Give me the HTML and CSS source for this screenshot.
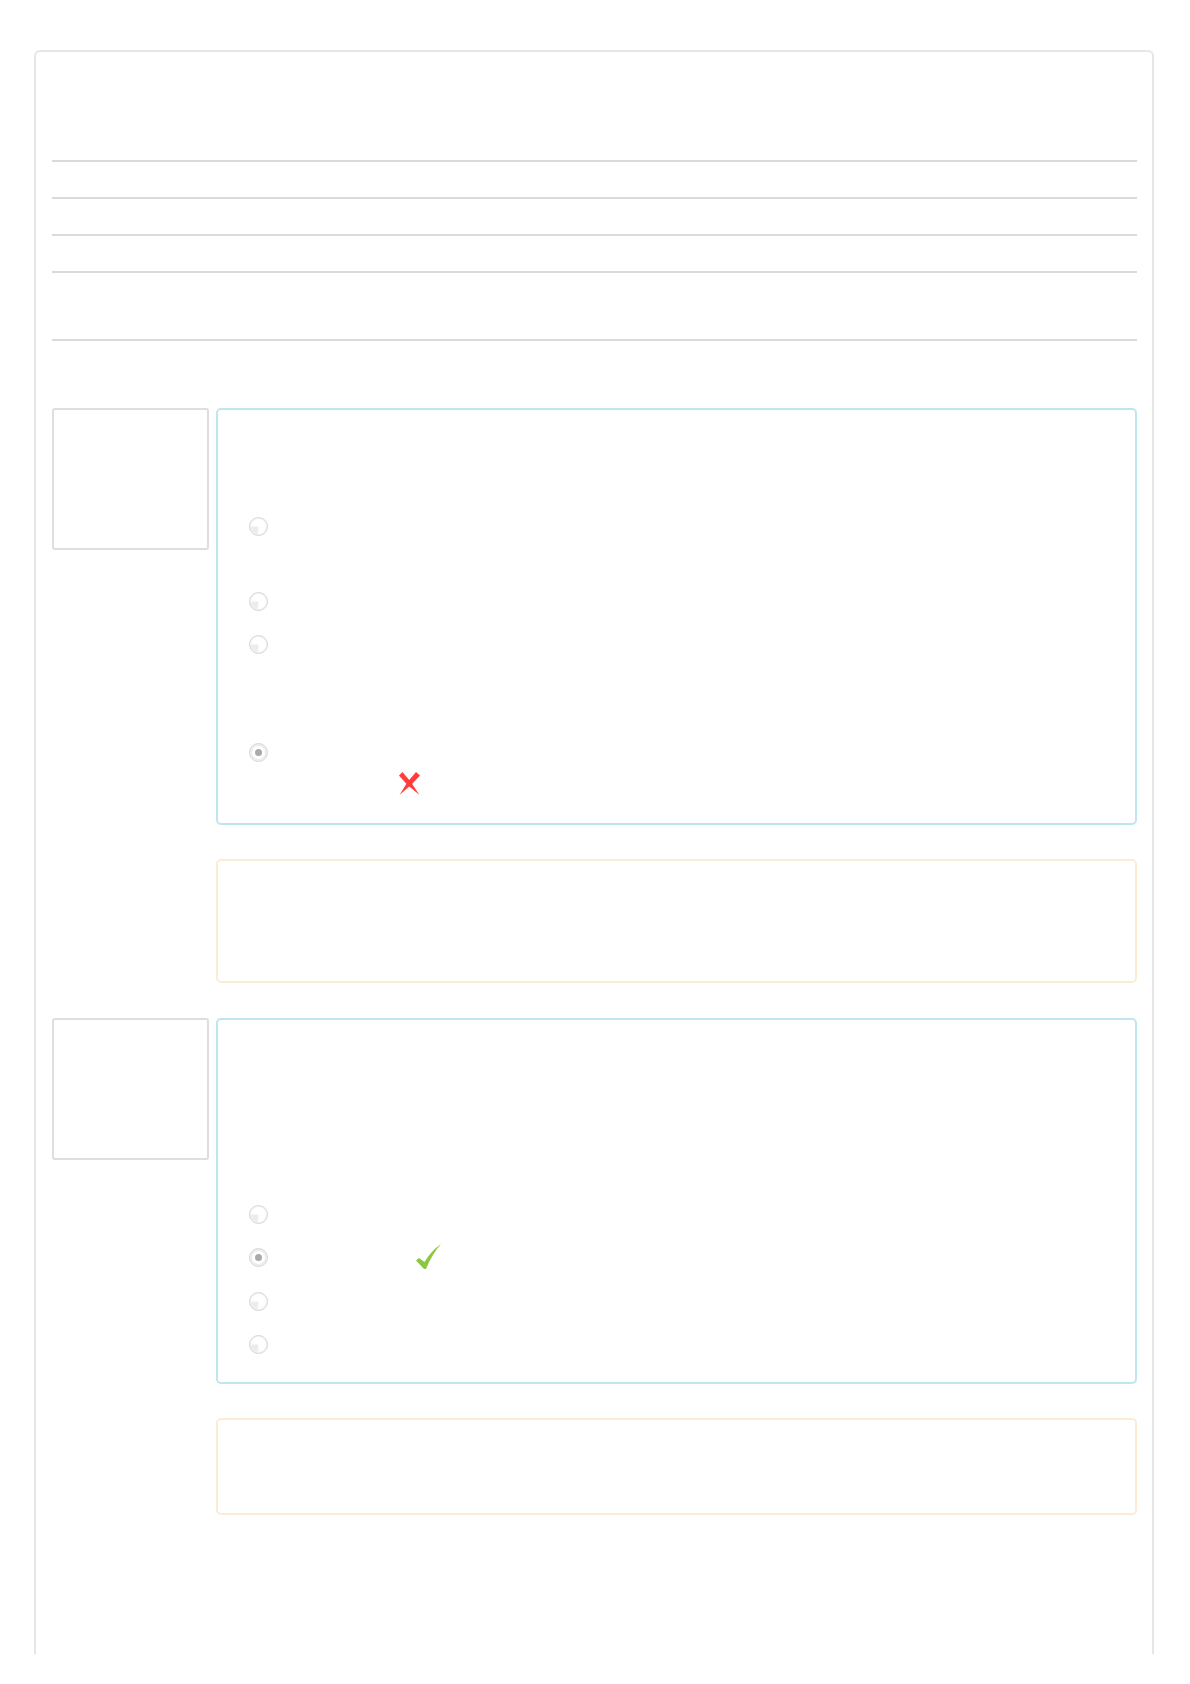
FILE: index.html
```html
<!DOCTYPE html>
<html lang="en">
<head>
<meta charset="utf-8">
<title>Quiz review</title>
<link rel="stylesheet" href="styles.css">
</head>
<body>
<div class="card">
  <div class="card-head"></div>
  <div class="summary">
    <div class="srow"></div>
    <div class="srow"></div>
    <div class="srow"></div>
    <div class="srow tall"></div>
  </div>

  <div class="que q1">
    <div class="info"></div>
    <div class="content">
      <div class="formulation">
        <div class="qtext"></div>
        <div class="ans h75"><span class="radio"></span></div>
        <div class="ans h43"><span class="radio"></span></div>
        <div class="ans h108"><span class="radio"></span></div>
        <div class="ans">
          <span class="radio checked"></span>
          <div class="label">
            <div class="spacer"></div>
            <svg class="icon-x" width="21" height="23" viewBox="0 0 21 23"><polygon points="0,3.5 3.5,0 11.5,9.5 20.5,23 8.5,13" fill="#ff3d3d"/><polygon points="17,0 21,3.5 12.5,12.5 0.5,23 8.5,10" fill="#ff3d3d"/></svg>
          </div>
        </div>
      </div>
      <div class="outcome o1"></div>
    </div>
  </div>

  <div class="que q2">
    <div class="info"></div>
    <div class="content">
      <div class="formulation">
        <div class="qtext"></div>
        <div class="ans h43"><span class="radio"></span></div>
        <div class="ans h44">
          <span class="radio checked"></span>
          <svg class="icon-check" width="25" height="25" viewBox="0 0 25 25"><path d="M0 16.5 L3 14 L8.5 18 Q15 7 25 0 Q16 10 10 25 L8 25 Z" fill="#8dc63f"/></svg>
        </div>
        <div class="ans h43"><span class="radio"></span></div>
        <div class="ans"><span class="radio"></span></div>
      </div>
      <div class="outcome o2"></div>
    </div>
  </div>
</div>
</body>
</html>
```

FILE: styles.css
```css
html, body {
  margin: 0;
  padding: 0;
  background: #ffffff;
  font-family: "Liberation Sans", Arial, sans-serif;
}

.card {
  box-sizing: border-box;
  width: 1120px;
  margin: 50px 0 0 34px;
  padding: 0 15px 139px 16px;
  border: 2px solid #e6e6e6;
  border-bottom: 0;
  border-radius: 6px 6px 0 0;
}

.card-head {
  height: 108px;
}

.summary {
  border-top: 2px solid #dadada;
}

.srow {
  height: 35px;
  border-bottom: 2px solid #dadada;
}

.srow.tall {
  height: 66px;
}

.que {
  display: flex;
  gap: 7px;
  align-items: flex-start;
}

.q1 {
  margin-top: 67px;
}

.q2 {
  margin-top: 35px;
}

.info {
  box-sizing: border-box;
  flex: 0 0 157px;
  height: 142px;
  border: 2px solid #dedede;
  border-radius: 3px;
}

.q2 .info {
  height: 142px;
}

.content {
  flex: 1;
}

.formulation {
  box-sizing: border-box;
  border: 2px solid #bde6ef;
  border-radius: 5px;
}

.q1 .formulation {
  height: 417px;
}

.q2 .formulation {
  height: 366px;
}

.q1 .qtext {
  height: 107px;
}

.q2 .qtext {
  height: 185px;
}

.ans {
  display: flex;
  align-items: flex-start;
  padding-left: 31px;
}

.h43 { height: 43px; }
.h44 { height: 44px; }
.h75 { height: 75px; }
.h108 { height: 108px; }

.radio {
  box-sizing: border-box;
  flex: 0 0 19px;
  width: 19px;
  height: 19px;
  border-radius: 50%;
  border: 1px solid #d6d6d6;
  background: conic-gradient(from 0deg, #ffffff 0deg 170deg, #ececec 200deg 255deg, #ffffff 285deg 360deg);
  box-shadow: inset 0 0 0 1px #f3f3f3;
  position: relative;
}

.radio.checked {
  background: #ffffff;
  box-shadow: inset 0 0 0 2px #ededed;
}

.radio.checked::after {
  content: "";
  position: absolute;
  left: 5px;
  top: 5px;
  width: 7px;
  height: 7px;
  border-radius: 50%;
  background: #aaaaaa;
}

.label {
  display: flex;
  flex-direction: column;
}

.spacer {
  height: 29px;
}

.icon-x {
  display: block;
  margin-left: 131px;
}

.icon-check {
  display: block;
  margin-top: -4px;
  margin-left: 148px;
}

.outcome {
  box-sizing: border-box;
  margin-top: 34px;
  border: 2px solid #fcecd4;
  border-radius: 5px;
}

.o1 {
  height: 124px;
}

.o2 {
  height: 97px;
}
```
